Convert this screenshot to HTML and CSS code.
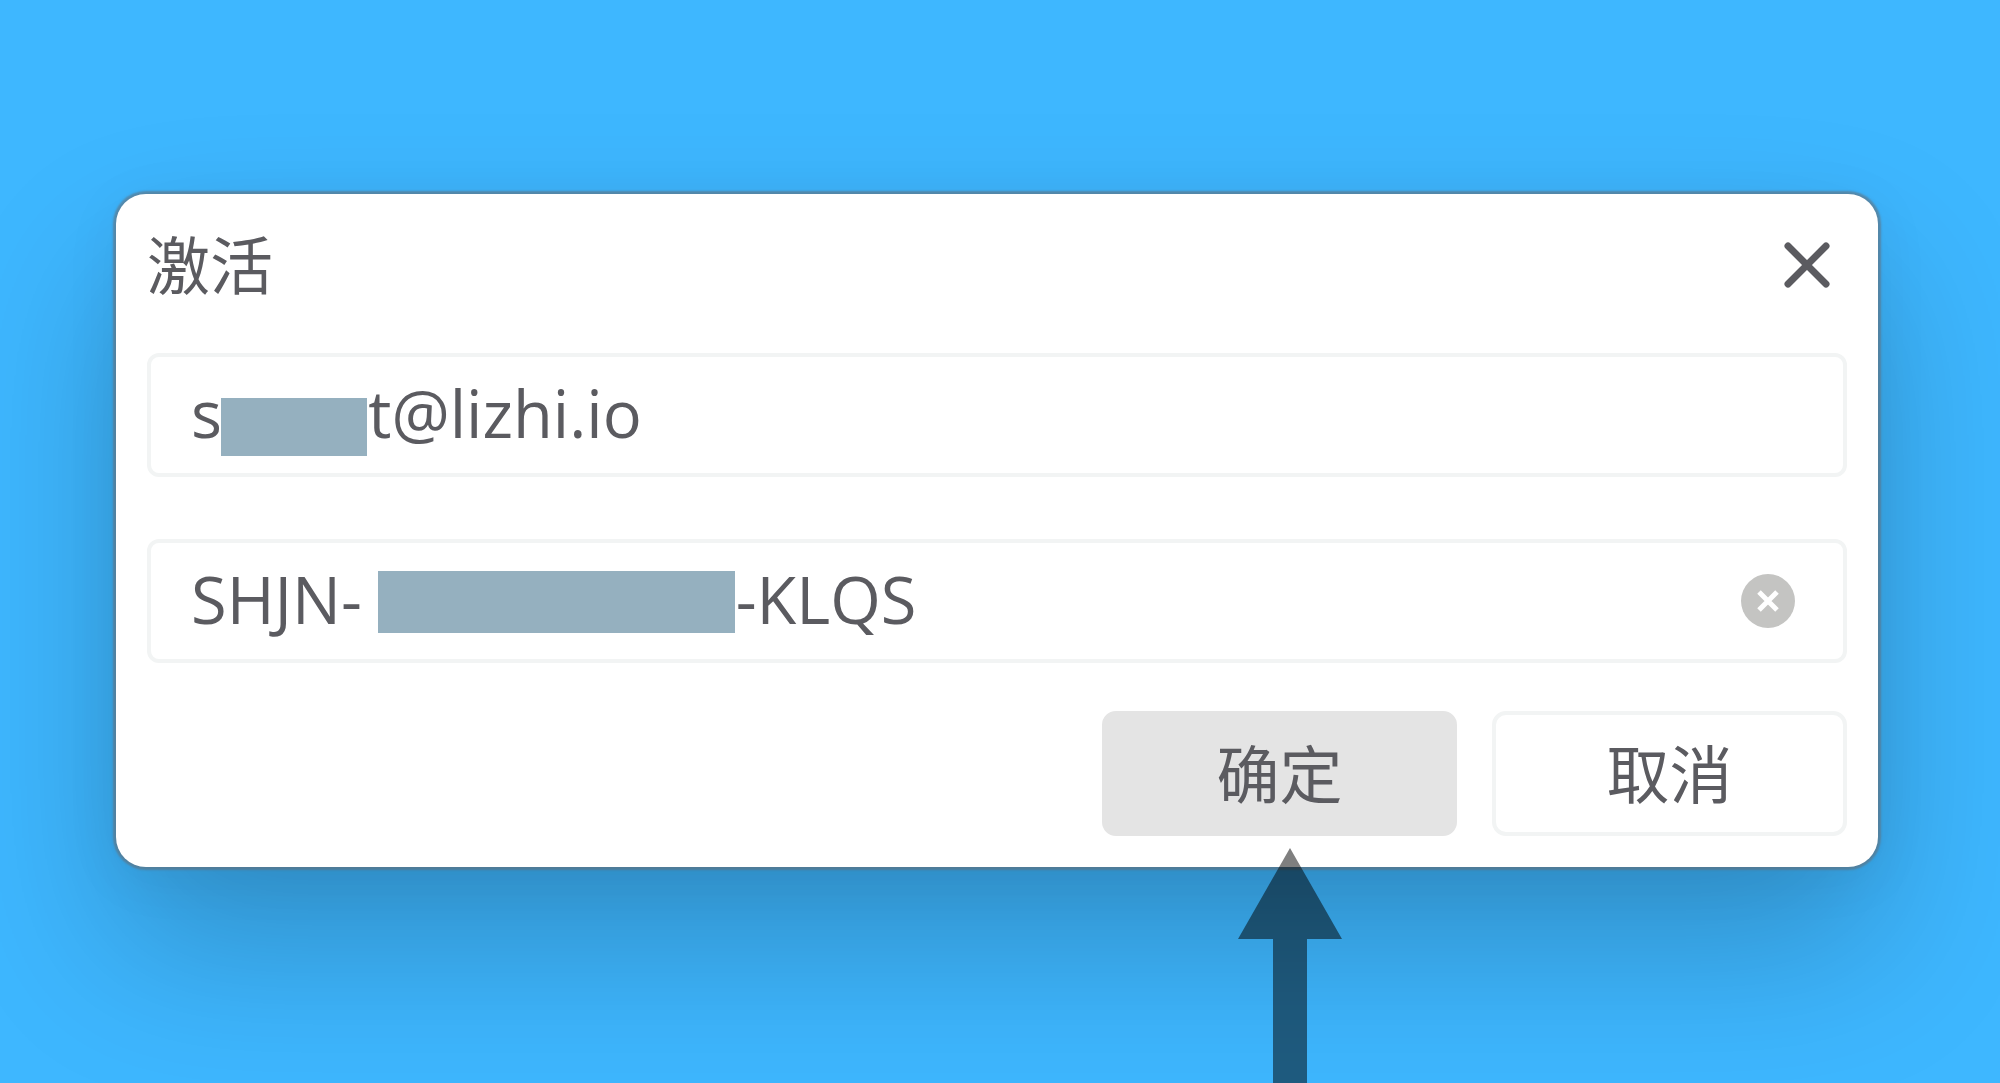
FILE: index.html
```html
<!DOCTYPE html>
<html lang="zh-CN">
<head>
  <meta charset="UTF-8">
  <meta name="viewport" content="width=device-width, initial-scale=1.0">
  <title>激活</title>

  <link rel="stylesheet" href="styles.css">
</head>

<body>

<form class="dialog">
  <header class="dialog-header">
    <h1>激活</h1>
    <button type="button" class="close-button" aria-label="关闭">
      <svg width="46" height="46" viewBox="0 0 46 46">
        <path d="M4 4L42 42M42 4L4 42" />
      </svg>
    </button>
  </header>

  <div class="field">
    <input type="text" id="email" aria-label="邮箱" value="s&emsp;&emsp;&#8197;t@lizhi.io">
    <span class="mask mask-email"></span>
  </div>

  <div class="field">
    <input type="text" id="code" aria-label="激活码" value="SHJN-&emsp;&emsp;&emsp;&emsp;&emsp;&ensp;&#8197;-KLQS">
    <span class="mask mask-code"></span>
    <button type="button" class="clear-button" aria-label="清除">
      <svg width="54" height="54" viewBox="0 0 54 54">
        <circle cx="27" cy="27" r="27" />
        <path d="M18 18L36 36M36 18L18 36" />
      </svg>
    </button>
  </div>

  <div class="actions">
    <div class="confirm">
      <button type="button" class="button primary">确定</button>
      <svg class="arrow" width="104" height="236" viewBox="0 0 104 236">
        <path d="M52 0L104 91H69V236H35V91H0Z" />
      </svg>
    </div>
    <button type="button" class="button">取消</button>
  </div>
</form>

</body>
</html>
```

FILE: styles.css
```css
* {
  box-sizing: border-box;
}

body {
  margin: 0;
  min-height: 100vh;
  padding: 194px 122px 0 116px;
  overflow: hidden;
  background-color: #3eb7ff;
  color: #5b5b60;
  font-family: "Open Sans", "Noto Sans CJK SC", sans-serif;
}

.dialog {
  padding: 31px;
  background-color: #fff;
  border-radius: 30px;
  box-shadow: 0 0 2px 3px rgba(100, 110, 120, 0.6), 0 10px 60px rgba(0, 0, 0, 0.06), 0 80px 160px rgba(0, 0, 0, 0.22);
}

.dialog-header {
  display: flex;
  justify-content: space-between;
  align-items: center;
  height: 80px;
  margin-bottom: 48px;
}

h1 {
  margin: 0;
  padding-bottom: 6px;
  font-family: "Noto Sans CJK SC", sans-serif;
  font-size: 63px;
  font-weight: 400;
  line-height: 80px;
}

.close-button,
.clear-button {
  display: flex;
  justify-content: center;
  align-items: center;
  padding: 0;
  border: none;
  background: none;
  cursor: pointer;
}

.close-button {
  width: 80px;
  height: 80px;
}

.close-button path {
  stroke: #5b5b60;
  stroke-width: 7;
  stroke-linecap: round;
}

.field {
  position: relative;
  display: flex;
  align-items: center;
  height: 124px;
  margin-bottom: 62px;
  padding: 0 48px 0 40px;
  border: 4px solid #f2f4f4;
  border-radius: 12px;
}

.field input {
  flex: 1;
  min-width: 0;
  height: 100%;
  padding: 0 0 4px;
  border: none;
  outline: none;
  background: none;
  color: inherit;
  font-family: inherit;
  font-size: 65px;
}

.mask {
  position: absolute;
  background-color: #95b0bf;
}

.mask-email {
  left: 70px;
  top: 41px;
  width: 146px;
  height: 58px;
}

.mask-code {
  left: 227px;
  top: 28px;
  width: 357px;
  height: 62px;
}

.clear-button circle {
  fill: #c4c4c2;
}

.clear-button path {
  stroke: #fff;
  stroke-width: 5;
}

.actions {
  display: flex;
  justify-content: flex-end;
  gap: 35px;
  margin-top: -14px;
}

.confirm {
  position: relative;
}

.button {
  width: 355px;
  height: 125px;
  padding: 0 0 6px;
  border: 4px solid #f2f4f4;
  border-radius: 14px;
  background-color: #fff;
  color: inherit;
  font-family: "Noto Sans CJK SC", sans-serif;
  font-size: 63px;
  cursor: pointer;
}

.button.primary {
  border-color: #e4e4e4;
  background-color: #e4e4e4;
}

/* points at the confirm button */
.arrow {
  position: absolute;
  left: 136px;
  top: 137px;
  fill: rgba(0, 0, 0, 0.5);
  pointer-events: none;
}
```
